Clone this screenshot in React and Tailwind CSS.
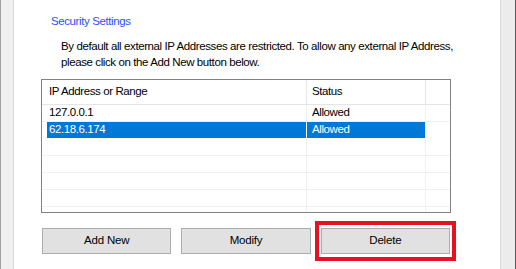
import React from 'react';

const rows = [
    { ip: '127.0.0.1', status: 'Allowed', selected: false },
    { ip: '62.18.6.174', status: 'Allowed', selected: true },
    { ip: '', status: '', selected: false },
    { ip: '', status: '', selected: false },
    { ip: '', status: '', selected: false },
    { ip: '', status: '', selected: false },
];

const Row = ({ ip, status, selected }) => (
    <div className={`flex h-[17px] shrink-0 border-b ${selected ? 'border-transparent' : 'border-[#f0f0f0]'}`}>
        <div className={`w-[265px] h-full border-r ${selected ? 'border-white' : 'border-[#f0f0f0]'}`}>
            {selected ? (
                <div className="ml-[5px] h-full bg-[#0078d7] text-white pl-[2px] flex items-center">{ip}</div>
            ) : (
                <div className="pl-[7px] h-full flex items-center">{ip}</div>
            )}
        </div>
        <div className={`w-[119px] h-full border-r border-[#f0f0f0] pl-[5px] flex items-center ${selected ? 'bg-[#0078d7] text-white' : ''}`}>
            {status}
        </div>
    </div>
);

const Button = ({ children }) => (
    <button className="h-[26px] w-full bg-[#e1e1e1] border border-[#adadad] text-black tracking-[-0.2px]">
        {children}
    </button>
);

const App = () => {
    return (
        <div className="flex w-[516px] h-[269px] overflow-hidden bg-[#f0f0f0] font-['Liberation_Sans',sans-serif] text-[11.5px] tracking-[-0.4px] text-black whitespace-nowrap">
            {/* left strip */}
            <div className="w-[14px] h-full border-l border-r border-l-[#a0a0a0] border-r-[#d9d9d9] bg-[#f0f0f0]" />

            {/* main panel */}
            <div className="w-[486px] h-full bg-white flex flex-col">
                <div className="pl-[37px] mt-[13px] leading-[16px] text-[#2a50ff]">Security Settings</div>
                <div className="pl-[47px] mt-[9px] leading-[16px]">
                    <div>By default all external IP Addresses are restricted. To allow any external IP Address,</div>
                    <div>please click on the Add New button below.</div>
                </div>

                <div className="ml-[27px] mt-[9px] w-[410px] h-[134px] border border-[#828282] flex flex-col overflow-hidden">
                    <div className="flex h-[25px] shrink-0 border-b border-[#e5e5e5]">
                        <div className="w-[265px] h-full border-r border-[#e5e5e5] pl-[7px] flex items-center">IP Address or Range</div>
                        <div className="w-[119px] h-full border-r border-[#e5e5e5] pl-[5px] flex items-center">Status</div>
                    </div>
                    {rows.map((r, i) => (
                        <Row key={i} {...r} />
                    ))}
                    <div className="flex flex-1">
                        <div className="w-[265px] h-full border-r border-[#f0f0f0]" />
                        <div className="w-[119px] h-full border-r border-[#f0f0f0]" />
                    </div>
                </div>

                <div className="ml-[28px] mt-[15px] w-[408px] grid grid-cols-3 gap-[10px]">
                    <Button>Add New</Button>
                    <Button>Modify</Button>
                    <div className="relative">
                        <Button>Delete</Button>
                        <div className="absolute -top-[7px] -bottom-[7px] -left-[6px] -right-[6px] border-4 border-[#e81123] pointer-events-none" />
                    </div>
                </div>
            </div>

            {/* right strip */}
            <div className="w-[16px] h-full border-l border-r border-l-[#d9d9d9] border-r-[#5a5a5a] bg-[#ececec]" />
        </div>
    );
};

export default App;
